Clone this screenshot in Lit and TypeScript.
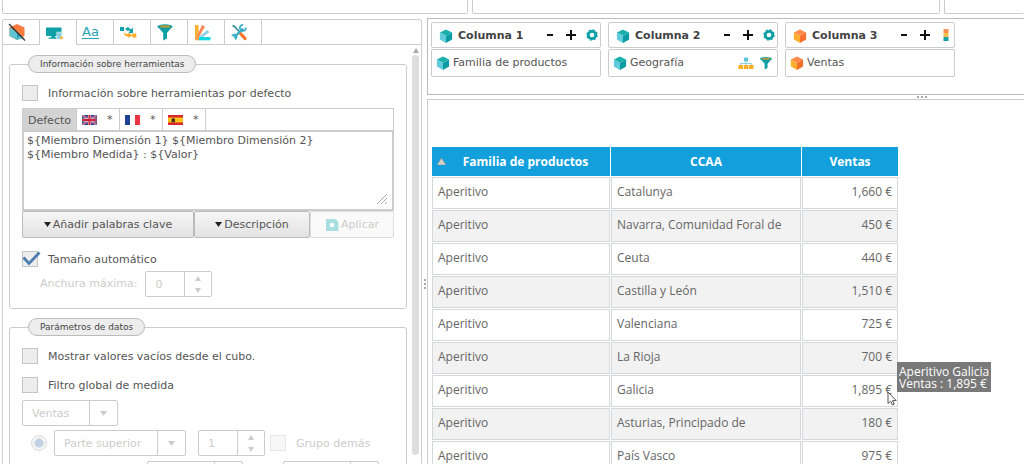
import { LitElement, html, svg, css, nothing } from "lit";
import { customElement, property } from "lit/decorators.js";

const cube = (top: string, left: string, right: string) => svg`
  <polygon points="8,0.500 15,4 8,8 1,4" fill=${top} />
  <polygon points="1,4 8,8 8,16 1,12" fill=${left} />
  <polygon points="15,4 15,12 8,16 8,8" fill=${right} />`;

const funnel = svg`
  <path d="M1.500 3.500 L7.200 10 V17.500 L11 15.500 V10 L16.500 3.500 Z" fill="#0f9fa6" />
  <ellipse cx="9" cy="3.600" rx="7.600" ry="2.300" fill="#0f9fa6" />
  <ellipse cx="9" cy="3.500" rx="5.600" ry="1.200" fill="#b79a35" />`;

const ICONS: Record<string, { box: string; art: unknown }> = {
  "cube-teal": { box: "0 0 16 16", art: cube("#1bb0ad", "#62cbdb", "#0c9ba3") },
  "cube-orange": { box: "0 0 16 16", art: cube("#ff8a4c", "#fdae2f", "#f4702c") },
  nocube: {
    box: "0 0 18 18",
    art: svg`
      <polygon points="9,1 16.500,4.500 16.500,13 9,17 1.500,13 1.500,4.500" fill="#f97c3e" />
      <polygon points="1.500,4.500 9,9 16,15 9,17 1.500,13" fill="#5fc4d3" />
      <polygon points="9,9 12.500,11.500 9,17" fill="#2f9fae" />
      <path d="M1 1 L17 17.500" stroke="#333" stroke-width="1.300" />`,
  },
  monitor: {
    box: "0 0 18 18",
    art: svg`
      <rect x="1" y="3.500" width="15.500" height="8.500" rx=".6" fill="#0f9fa6" />
      <path d="M6.500 12 H10 L10.500 13.500 H12.500 V14.800 H3.500 V13.500 H6 Z" fill="#0f9fa6" />
      <rect x="11.800" y="8" width="4.700" height="7" fill="#8ccfe4" stroke="#fff" stroke-width=".4" />
      <circle cx="16.500" cy="13.800" r="1.500" fill="#ffb02e" />`,
  },
  swap: {
    box: "0 0 18 18",
    art: svg`
      <rect x="1" y="4" width="4" height="4" fill="#0f9fa6" />
      <path d="M6 6 L9.500 3.500 V5 Q11 5 12 6.500 L14 4.500 V10 H9.500 L11 8 Q10 7 9.500 7 V8.500 Z" fill="#0f9fa6" />
      <path d="M5 9 Q6 11.500 9.500 11 V9.500 L13.500 12.300 L9.500 15 V13.500 Q5 13.500 5 9 Z" fill="#ffab24" />
      <rect x="13.300" y="10.500" width="4" height="4" fill="#ffab24" />`,
  },
  funnel: { box: "0 0 18 18", art: funnel },
  fan: {
    box: "0 0 18 18",
    art: svg`
      <rect x="2" y="2" width="3.600" height="15" fill="#fbb034" />
      <polygon points="9,2 12,3.500 5.600,15 4,13" fill="#f9895a" />
      <polygon points="14.500,7 16.500,9.200 6,16.500 5,14.500" fill="#8fd0e6" />
      <rect x="6" y="14" width="11.500" height="3.300" fill="#10d8e2" />
      <rect x="2" y="13.500" width="4" height="3.800" fill="#f9a04a" />`,
  },
  tools: {
    box: "0 0 18 18",
    art: svg`
      <path d="M2.500 2.500 L4.500 3.500 L9 8.500" stroke="#2f8fa0" stroke-width="1.700" fill="none" />
      <path d="M10 10 L15 15.500" stroke="#f4732f" stroke-width="3.200" stroke-linecap="round" />
      <path d="M4 14.500 L13 5.500" stroke="#38aec6" stroke-width="2.400" />
      <path d="M15.800 4.600 A3 3 0 1 1 13.200 2" stroke="#38aec6" stroke-width="1.800" fill="none" />
      <path d="M2 13 A2.400 2.400 0 1 1 5 16.200" stroke="#38aec6" stroke-width="1.700" fill="none" />`,
  },
  gear: {
    box: "0 0 12 12",
    art: svg`
      <circle cx="6" cy="6" r="3.700" fill="none" stroke="#0f9fa6" stroke-width="2.800" />
      <circle cx="6" cy="6" r="5.100" fill="none" stroke="#0f9fa6" stroke-width="1.200" stroke-dasharray="2.200 1.805" />`,
  },
  swatch: {
    box: "0 0 5 12",
    art: svg`
      <rect width="5" height="4" fill="#f99157" />
      <rect y="4" width="5" height="4" fill="#fbc04d" />
      <rect y="8" width="5" height="4" fill="#16a3a6" />`,
  },
  tree: {
    box: "0 0 16 14",
    art: svg`
      <rect x="6" y="1.500" width="4" height="4" fill="#5fc4d3" />
      <path d="M8 5 V9 M2.500 9.500 V7.500 H13.500 V9.500" stroke="#8ccfdc" stroke-width="1" fill="none" />
      <rect x="0.500" y="9" width="4.500" height="4" fill="#ffab24" />
      <rect x="5.800" y="9" width="4.500" height="4" fill="#ffab24" />
      <rect x="11" y="9" width="4.500" height="4" fill="#ffab24" />`,
  },
  tag: {
    box: "0 0 14 14",
    art: svg`
      <path d="M1 1 H9.500 Q13.500 2 13.500 6 V13 H1 Z" fill="#aadfe2" />
      <circle cx="7" cy="7" r="2.200" fill="#fff" />`,
  },
  uk: {
    box: "0 0 15 10",
    art: svg`
      <rect width="15" height="10" fill="#2b3a86" />
      <path d="M0 0 L15 10 M15 0 L0 10" stroke="#b9a7c6" stroke-width="2" />
      <path d="M0 0 L15 10 M15 0 L0 10" stroke="#c8324c" stroke-width=".8" />
      <path d="M7.500 0 V10 M0 5 H15" stroke="#e5dbe6" stroke-width="3.200" />
      <path d="M7.500 0 V10 M0 5 H15" stroke="#cf2440" stroke-width="2" />`,
  },
  fr: {
    box: "0 0 15 10",
    art: svg`
      <rect width="15" height="10" fill="#fff" />
      <rect width="5" height="10" fill="#1f3f94" />
      <rect x="10" width="5" height="10" fill="#ee3344" />`,
  },
  es: {
    box: "0 0 15 10",
    art: svg`
      <rect width="15" height="10" fill="#d9252e" />
      <rect y="2.500" width="15" height="5" fill="#fcc11c" />
      <path d="M3.500 7.300 V4 L5.300 3 L7 4 V7.300 Z" fill="#4b3215" />`,
  },
  cursor: {
    box: "0 0 10 15",
    art: svg`<path d="M1 1 V12.500 L3.600 10.200 L5.400 14 L7.300 13.200 L5.600 9.600 H9.200 Z" fill="#fff" stroke="#555" stroke-width="1" />`,
  },
};

const icon = (name: string, cls = "ico") =>
  html`<svg class=${cls} viewBox=${ICONS[name].box} aria-hidden="true">${ICONS[name].art}</svg>`;

const controls = css`
  *,
  *::before,
  *::after {
    box-sizing: border-box;
  }
  button,
  input,
  select,
  textarea {
    font: inherit;
    color: inherit;
    margin: 0;
  }
  button {
    border: 0;
    padding: 0;
    background: none;
  }
  svg {
    display: block;
    flex: none;
  }
`;

@customElement("olap-check")
class OlapCheck extends LitElement {
  @property() label = "";
  @property({ type: Boolean }) checked = false;
  @property({ type: Boolean }) disabled = false;
  static styles = [
    controls,
    css`
      :host {
        display: block;
      }
      .row {
        display: flex;
        align-items: center;
        gap: 10px;
        height: 16px;
      }
      .text {
        padding-top: 2px;
      }
      .box {
        appearance: none;
        flex: none;
        width: 16px;
        height: 16px;
        border: 1px solid #c4c4c4;
        background: #ededed;
      }
      .mark {
        position: relative;
        display: flex;
      }
      .tick {
        position: absolute;
        left: 0;
        top: 0;
        width: 19px;
        height: 16px;
      }
      .off {
        color: #ccc;
      }
      .off .box {
        border-color: #e6e6e6;
        background: #f7f7f7;
      }
    `,
  ];
  render() {
    return html`<label class="row ${this.disabled ? "off" : ""}">
      <span class="mark">
        <input class="box" type="checkbox" .checked=${this.checked} ?disabled=${this.disabled} />
        ${this.checked
          ? html`<svg class="tick" viewBox="0 0 19 16"><path d="M1.500 6.500 L7 12.500 L17.500 1.500" fill="none" stroke="#4b7db0" stroke-width="2.800" /></svg>`
          : nothing}
      </span>
      <span class="text">${this.label}</span>
    </label>`;
  }
}

@customElement("olap-spinner")
class OlapSpinner extends LitElement {
  @property() value = "";
  @property() label = "";
  static styles = [
    controls,
    css`
      :host {
        display: block;
        width: 67px;
      }
      .spin {
        display: grid;
        grid-template-columns: 1fr 27px;
        height: 26px;
        border: 1px solid #ccc;
        border-radius: 2px;
        background: #fff;
      }
      .num {
        appearance: textfield;
        min-width: 0;
        width: 100%;
        border: 0;
        padding: 2px 0 0 9px;
        background: none;
        color: #ccc;
      }
      .num::-webkit-inner-spin-button {
        appearance: none;
      }
      .steps {
        display: grid;
        border-left: 1px solid #ccc;
      }
      .step {
        display: grid;
        place-items: center;
      }
      .arrow {
        width: 6px;
        height: 5px;
      }
    `,
  ];
  render() {
    return html`<div class="spin">
      <input class="num" type="number" aria-label=${this.label} .value=${this.value} disabled />
      <span class="steps">
        <button class="step" aria-label="+" disabled><svg class="arrow" viewBox="0 0 6 5"><path d="M0 5 L3 0 L6 5Z" fill="#ccc" /></svg></button>
        <button class="step" aria-label="-" disabled><svg class="arrow" viewBox="0 0 6 5"><path d="M0 0 L3 5 L6 0Z" fill="#ccc" /></svg></button>
      </span>
    </div>`;
  }
}

@customElement("olap-select")
class OlapSelect extends LitElement {
  @property() value = "";
  @property() label = "";
  static styles = [
    controls,
    css`
      :host {
        display: block;
      }
      .wrap {
        display: grid;
        grid-template-columns: 1fr 28px;
        height: 26px;
        border: 1px solid #ccc;
        border-radius: 2px;
        background: #fff;
      }
      .sel {
        grid-area: 1 / 1 / 2 / 3;
        appearance: none;
        border: 0;
        background: none;
        padding: 2px 0 0 9px;
        color: #ccc;
        opacity: 1;
      }
      .drop {
        grid-area: 1 / 2;
        display: grid;
        place-items: center;
        border-left: 1px solid #ccc;
        pointer-events: none;
      }
      .arrow {
        width: 7px;
        height: 5px;
      }
    `,
  ];
  render() {
    return html`<div class="wrap">
      <select class="sel" aria-label=${this.label} disabled>
        <option>${this.value}</option>
      </select>
      <span class="drop"><svg class="arrow" viewBox="0 0 7 5"><path d="M0 0 H7 L3.500 5Z" fill="#ccc" /></svg></span>
    </div>`;
  }
}

const TABS = ["nocube", "monitor", "text", "swap", "funnel", "fan", "tools"];

@customElement("options-panel")
class OptionsPanel extends LitElement {
  static styles = [
    controls,
    css`
      :host {
        display: flex;
        flex-direction: column;
        min-height: 0;
        border: 1px solid #ccc;
        border-bottom: 0;
        border-radius: 3px 3px 0 0;
        background: #fff;
      }
      .tabs {
        display: flex;
        flex: none;
        height: 25px;
        border-bottom: 1px solid #ccc;
      }
      .tab {
        display: flex;
        align-items: center;
        width: 37px;
        height: 24px;
        padding-left: 5px;
        border-right: 1px solid #ccc;
      }
      .tab.on {
        height: 25px;
        background: #fff;
      }
      .ico {
        width: 18px;
        height: 18px;
      }
      .glyph {
        color: #26a3b4;
        font-size: 13px;
        line-height: 13px;
        border-bottom: 1px solid #26a3b4;
      }
      .scroll {
        display: grid;
        grid-template-columns: minmax(0, 1fr) 9px;
        gap: 5px;
        min-height: 0;
        overflow: hidden;
        padding-left: 6px;
      }
      .bar {
        display: flex;
        flex-direction: column;
        align-items: center;
        gap: 2px;
        padding: 3px 2px 9px 0;
        height: calc(100vh - 45px);
      }
      .up {
        width: 6px;
        height: 5px;
      }
      .thumb {
        flex: 1;
        width: 7px;
        border-radius: 4px;
        background: #ddd;
      }
      .forms {
        display: flex;
        flex-direction: column;
        gap: 9px;
        padding-top: 10px;
      }
      .group {
        min-width: 0;
        margin: 0;
        padding: 0 12px 11px;
        border: 1px solid #ccc;
        border-radius: 3px;
      }
      .pill {
        margin-left: 6px;
        height: 18px;
        padding: 0 11px;
        border: 1px solid #bbb;
        border-radius: 9px;
        background: #ededed;
        color: #444;
        font-size: 9px;
        line-height: 16px;
      }
      .first {
        margin-top: 12px;
      }
      .editor {
        margin-top: 7px;
      }
      .langs {
        display: flex;
        height: 22px;
        border: 1px solid #ccc;
        border-bottom: 0;
      }
      .lang {
        display: flex;
        align-items: center;
        gap: 10px;
        width: 43px;
        padding: 0 5px;
        border-right: 1px solid #ccc;
      }
      .lang.on {
        width: auto;
        padding-top: 2px;
        background: #d3d3d3;
      }
      .flag {
        width: 15px;
        height: 10px;
      }
      .area {
        display: block;
        width: 100%;
        height: 81px;
        padding: 2px 3px;
        border: 2px solid #ccc;
        background: #fff;
        resize: none;
        outline: 0;
        line-height: 14px;
      }
      .field {
        display: grid;
      }
      .field > * {
        grid-area: 1 / 1;
      }
      .grip {
        place-self: end;
        width: 12px;
        height: 12px;
        margin: 6px;
      }
      .actions {
        display: grid;
        grid-template-columns: 172fr 116fr 84fr;
      }
      .act {
        display: flex;
        align-items: center;
        justify-content: center;
        gap: 2px;
        height: 27px;
        border: 1px solid #bbb;
        border-radius: 2px;
        background: linear-gradient(#f6f6f6, #e2e2e2);
        white-space: nowrap;
      }
      .act.off {
        border-color: #ddd;
        background: #fafafa;
        color: #ccc;
      }
      .caret {
        width: 7px;
        height: 5px;
      }
      .disk {
        width: 14px;
        height: 14px;
      }
      .auto {
        margin-top: 13px;
      }
      .line {
        display: flex;
        align-items: center;
        color: #ccc;
      }
      .width {
        gap: 8px;
        margin-top: 4px;
        padding-left: 18px;
      }
      .second {
        margin-top: 13px;
      }
      .measure {
        width: 96px;
        margin-top: 7px;
      }
      .rank {
        margin-top: 4px;
        padding-left: 9px;
      }
      .radio {
        appearance: none;
        flex: none;
        width: 16px;
        height: 16px;
        margin-right: 7px;
        border: 1px solid #ddd;
        border-radius: 50%;
        background: radial-gradient(circle, #c3d3e3 4px, #f4f4f4 5px);
      }
      .where {
        width: 132px;
        margin-right: 12px;
      }
      .rest {
        margin-left: 5px;
      }
      .more {
        display: grid;
        grid-template-columns: 96px 96px;
        gap: 40px;
        margin-top: 5px;
        padding-left: 125px;
      }
    `,
  ];
  render() {
    const caret = html`<svg class="caret" viewBox="0 0 7 5"><path d="M0 0 H7 L3.500 5Z" fill="#222" /></svg>`;
    return html`
      <div class="tabs">
        ${TABS.map(
          (t, i) => html`<button class="tab ${i === 1 ? "on" : ""}">
            ${t === "text" ? html`<span class="glyph">Aa</span>` : icon(t)}
          </button>`
        )}
      </div>
      <div class="scroll">
        <div class="forms">
          <fieldset class="group">
            <legend class="pill">Información sobre herramientas</legend>
            <olap-check class="first" label="Información sobre herramientas por defecto"></olap-check>
            <div class="editor">
              <div class="langs">
                <button class="lang on">Defecto</button>
                ${["uk", "fr", "es"].map((f) => html`<button class="lang">${icon(f, "flag")}<span>*</span></button>`)}
              </div>
              <div class="field">
                <textarea class="area" aria-label="Defecto" .value=${"${Miembro Dimensión 1} ${Miembro Dimensión 2}\n${Miembro Medida} : ${Valor}"}></textarea>
                <svg class="grip" viewBox="0 0 12 12"><path d="M1 11 L11 1 M5 11 L11 5 M9 11 L11 9" stroke="#aaa" /></svg>
              </div>
              <div class="actions">
                <button class="act">${caret}Añadir palabras clave</button>
                <button class="act">${caret}Descripción</button>
                <button class="act off" disabled>${icon("tag", "disk")}Aplicar</button>
              </div>
            </div>
            <olap-check class="auto" label="Tamaño automático" checked></olap-check>
            <div class="line width">
              <span>Anchura máxima:</span>
              <olap-spinner value="0" label="Anchura máxima"></olap-spinner>
            </div>
          </fieldset>
          <fieldset class="group">
            <legend class="pill">Parámetros de datos</legend>
            <olap-check class="first" label="Mostrar valores vacíos desde el cubo."></olap-check>
            <olap-check class="second" label="Filtro global de medida"></olap-check>
            <olap-select class="measure" value="Ventas" label="Medida"></olap-select>
            <div class="line rank">
              <input class="radio" type="radio" aria-label="Parte superior" checked disabled />
              <olap-select class="where" value="Parte superior" label="Parte"></olap-select>
              <olap-spinner value="1" label="Cantidad"></olap-spinner>
              <olap-check class="rest" label="Grupo demás" disabled></olap-check>
            </div>
            <div class="more">
              <olap-select label="Desde"></olap-select>
              <olap-select label="Hasta"></olap-select>
            </div>
          </fieldset>
        </div>
        <div class="bar">
          <svg class="up" viewBox="0 0 6 5"><path d="M0 5 L3 0 L6 5Z" fill="#aaa" /></svg>
          <span class="thumb"></span>
        </div>
      </div>
    `;
  }
}

const COLUMNS = [
  { title: "Columna 1", item: "Familia de productos", cube: "cube-teal", action: "gear", extras: [] as string[] },
  { title: "Columna 2", item: "Geografía", cube: "cube-teal", action: "gear", extras: ["tree", "funnel"] },
  { title: "Columna 3", item: "Ventas", cube: "cube-orange", action: "swatch", extras: [] as string[] },
];

@customElement("column-shelf")
class ColumnShelf extends LitElement {
  static styles = [
    controls,
    css`
      :host {
        display: grid;
        grid-template-columns: repeat(3, 170px);
        gap: 7px;
        height: 77px;
        padding: 3px;
        border: 1px solid #bbb;
        border-right: 0;
        background: #fff;
      }
      .card {
        display: flex;
        flex-direction: column;
        gap: 1px;
      }
      .head,
      .item {
        display: flex;
        align-items: center;
        border: 1px solid #ccc;
        border-radius: 2px;
      }
      .head {
        height: 26px;
        gap: 5px;
        padding: 2px 2px 0 7px;
        color: #444;
        font-weight: bold;
      }
      .item {
        height: 28px;
        gap: 3px;
        padding: 0 3px 0 4px;
      }
      .name {
        flex: 1;
        white-space: nowrap;
      }
      .ico {
        width: 14px;
        height: 14px;
      }
      .op {
        width: 12px;
        height: 12px;
      }
      .ops {
        display: flex;
        align-items: center;
        gap: 9px;
        padding-bottom: 2px;
      }
      .extra {
        width: 16px;
        height: 14px;
      }
      .extras {
        display: flex;
        gap: 4px;
      }
    `,
  ];
  render() {
    return COLUMNS.map(
      (c) => html`<section class="card">
        <div class="head">
          ${icon(c.cube)}<span class="name">${c.title}</span>
          <span class="ops">
            <button aria-label="-"><svg class="op" viewBox="0 0 12 12"><path d="M3 6 H9" stroke="#111" stroke-width="2" /></svg></button>
            <button aria-label="+"><svg class="op" viewBox="0 0 12 12"><path d="M1 6 H11 M6 1 V11" stroke="#111" stroke-width="2" /></svg></button>
            <button aria-label=${c.title}>${icon(c.action, "op")}</button>
          </span>
        </div>
        <div class="item">
          ${icon(c.cube)}<span class="name">${c.item}</span>
          <span class="extras">${c.extras.map((e) => icon(e, "extra"))}</span>
        </div>
      </section>`
    );
  }
}

const ROWS = [
  ["Catalunya", "1,660 €"],
  ["Navarra, Comunidad Foral de", "450 €"],
  ["Ceuta", "440 €"],
  ["Castilla y León", "1,510 €"],
  ["Valenciana", "725 €"],
  ["La Rioja", "700 €"],
  ["Galicia", "1,895 €"],
  ["Asturias, Principado de", "180 €"],
  ["País Vasco", "975 €"],
];

@customElement("result-table")
class ResultTable extends LitElement {
  static styles = [
    controls,
    css`
      :host {
        display: block;
        min-height: 0;
        padding: 47px 4px 0;
        border: 1px solid #ccc;
        border-width: 1px 0 0 1px;
        background: #fff;
        font: 12px/16px "Open Sans", sans-serif;
        color: #666;
      }
      .grid {
        border-collapse: separate;
        border-spacing: 1px;
        margin: -1px;
        table-layout: fixed;
        width: 468px;
      }
      .c1 {
        width: 178px;
      }
      .c2 {
        width: 190px;
      }
      th {
        height: 29px;
        padding: 0 5px;
        background: #129fdb;
        color: #fff;
        font-weight: bold;
      }
      .sort {
        display: flex;
        align-items: center;
      }
      .sort span {
        flex: 1;
      }
      .asc {
        width: 9px;
        height: 7px;
      }
      td {
        height: 32px;
        padding: 0 5px 2px;
        border: 1px solid #d4d8d8;
        white-space: nowrap;
      }
      tr:nth-child(even) td {
        background: #f2f2f2;
      }
      .val {
        text-align: right;
        position: relative;
      }
      .tip {
        position: absolute;
        left: 100%;
        top: -14px;
        z-index: 1;
        padding: 4px 2px 2px;
        background: #797979;
        color: #fff;
        text-align: left;
        line-height: 12px;
      }
      .pointer {
        position: absolute;
        right: 0;
        bottom: 0;
        width: 10px;
        height: 15px;
      }
    `,
  ];
  render() {
    return html`<table class="grid">
      <colgroup><col class="c1" /><col class="c2" /><col /></colgroup>
      <thead>
        <tr>
          <th>
            <div class="sort">
              <svg class="asc" viewBox="0 0 9 7"><path d="M0 7 L4.500 0 L9 7Z" fill="#d5cfc8" stroke="#8a8a8a" stroke-width=".5" /></svg>
              <span>Familia de productos</span>
            </div>
          </th>
          <th>CCAA</th>
          <th>Ventas</th>
        </tr>
      </thead>
      <tbody>
        ${ROWS.map(
          ([place, value]) => html`<tr>
            <td>Aperitivo</td>
            <td>${place}</td>
            <td class="val">
              ${value}${place === "Galicia"
                ? html`<div class="tip" role="tooltip">Aperitivo Galicia<br />Ventas : 1,895 €</div>${icon("cursor", "pointer")}`
                : nothing}
            </td>
          </tr>`
        )}
      </tbody>
    </table>`;
  }
}

@customElement("app-root")
class AppRoot extends LitElement {
  static styles = [
    controls,
    css`
      :host {
        display: flex;
        flex-direction: column;
        gap: 4px;
        height: 100vh;
        overflow: hidden;
        background: #fff;
        color: #555;
        font: 11px/14px "DejaVu Sans", Verdana, sans-serif;
      }
      .top {
        display: grid;
        grid-template-columns: 466fr 468fr 80fr;
        gap: 4px;
        flex: none;
        height: 14px;
        padding-left: 2px;
      }
      .slot {
        border: 1px solid #ccc;
        border-top: 0;
        border-radius: 0 0 2px 2px;
      }
      .slot:last-child {
        border-right: 0;
      }
      .main {
        display: grid;
        grid-template-columns: minmax(0, 420fr) 5px minmax(0, 597fr);
        flex: 1;
        min-height: 0;
        padding-left: 2px;
      }
      .options {
        margin-top: 1px;
      }
      .vsplit,
      .hsplit {
        display: flex;
        align-items: center;
        gap: 2px;
      }
      .vsplit {
        flex-direction: column;
        min-height: 0;
      }
      .vsplit::before {
        content: "";
        flex: 3;
      }
      .vsplit::after {
        content: "";
        flex: 2;
      }
      .hsplit {
        height: 4px;
        padding-left: 82%;
      }
      .dot {
        width: 2px;
        height: 2px;
        background: #aaa;
      }
      .right {
        display: grid;
        grid-template-rows: auto auto minmax(0, 1fr);
        min-width: 0;
        min-height: 0;
      }
    `,
  ];
  render() {
    const dots = [0, 1, 2].map(() => html`<span class="dot"></span>`);
    return html`
      <div class="top"><div class="slot"></div><div class="slot"></div><div class="slot"></div></div>
      <div class="main">
        <options-panel class="options"></options-panel>
        <div class="vsplit">${dots}</div>
        <div class="right">
          <column-shelf></column-shelf>
          <div class="hsplit">${dots}</div>
          <result-table></result-table>
        </div>
      </div>
    `;
  }
}
